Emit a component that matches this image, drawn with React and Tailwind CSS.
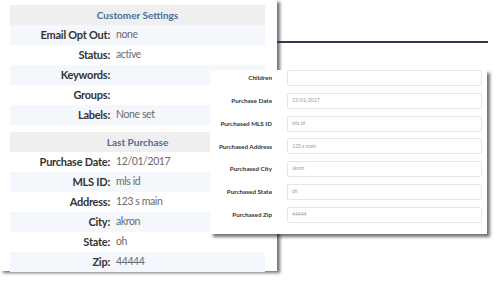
import React from "react";

const customerRows = [
  { label: "Email Opt Out:", value: "none" },
  { label: "Status:", value: "active" },
  { label: "Keywords:", value: "" },
  { label: "Groups:", value: "" },
  { label: "Labels:", value: "None set" },
];

const purchaseRows = [
  { label: "Purchase Date:", value: "12/01/2017" },
  { label: "MLS ID:", value: "mls id" },
  { label: "Address:", value: "123 s main" },
  { label: "City:", value: "akron" },
  { label: "State:", value: "oh" },
  { label: "Zip:", value: "44444" },
];

const formRows = [
  { label: "Children", value: "" },
  { label: "Purchase Date", value: "12/01/2017" },
  { label: "Purchased MLS ID", value: "mls id" },
  { label: "Purchased Address", value: "123 s main" },
  { label: "Purchased City", value: "akron" },
  { label: "Purchased State", value: "oh" },
  { label: "Purchased Zip", value: "44444" },
];

const SectionHeader = ({ title }) => (
  <div className="flex h-[20px] items-center justify-center bg-[#efefef] text-[10px] font-bold text-[#4b6d99]">
    {title}
  </div>
);

const InfoRow = ({ label, value, striped }) => (
  <div className={`flex h-[20px] items-center ${striped ? "bg-[#f4f7fb]" : "bg-white"}`}>
    <span className="w-[100px] shrink-0 text-right text-[11px] font-bold tracking-[-0.25px] text-[#333]">
      {label}
    </span>
    <span className="pl-[6px] text-[10.5px] tracking-[-0.4px] text-[#6b6b6b]">{value}</span>
  </div>
);

const App = () => {
  return (
    <div
      className="relative h-[281px] w-[500px] overflow-hidden bg-white"
      style={{ fontFamily: "Lato, 'Open Sans', sans-serif" }}
    >
      <div className="h-[271px] w-[277px] bg-white pl-[10px] pr-[12px] pt-[5px] shadow-[3px_2px_3px_rgba(0,0,0,0.55)]">
        <SectionHeader title="Customer Settings" />
        {customerRows.map((row, i) => (
          <InfoRow key={row.label} label={row.label} value={row.value} striped={i % 2 === 0} />
        ))}
        <div className="h-[7px]" />
        <SectionHeader title="Last Purchase" />
        {purchaseRows.map((row, i) => (
          <InfoRow key={row.label} label={row.label} value={row.value} striped={i % 2 === 1} />
        ))}
      </div>

      <div className="absolute left-[277px] top-[41px] h-[2px] w-[211px] bg-[#2f3752]" />

      <div className="absolute left-[210px] top-[70px] flex h-[164px] w-[277px] flex-col gap-[6.8px] bg-white pr-[5px] shadow-[3px_3px_3px_rgba(0,0,0,0.55)]">
        {formRows.map((row) => (
          <div key={row.label} className="flex h-[16px] items-center">
            <span className="w-[62px] shrink-0 text-right text-[6.3px] font-bold text-[#333]">{row.label}</span>
            <div className="ml-[15px] flex h-full flex-1 items-center rounded-[2px] border border-[#e6e6e6] pl-[4px] text-[5px] text-[#999]">
              {row.value}
            </div>
          </div>
        ))}
      </div>
    </div>
  );
};

export default App;
